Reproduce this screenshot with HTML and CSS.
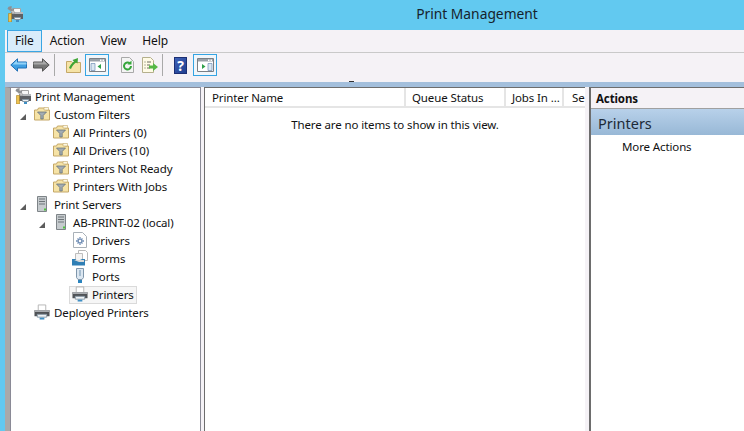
FILE: index.html
```html
<!DOCTYPE html>
<html lang="en">
<head>
    <meta charset="UTF-8">
    <title>Print Management</title>
    <link rel="stylesheet" href="styles.css">
</head>
<body>
    <svg class="defs" width="0" height="0">
        <defs>
            <symbol id="printer" viewBox="0 0 17 16">
                <path d="M4.500 .5h8v6h-8z" fill="#fff" stroke="#b4b4b4"/>
                <path d="M.5 6h16v6.500H.5z" fill="#4f5256"/>
                <path d="M1 6h15v2H1z" fill="#a9acb0"/>
                <path d="M3.500 10.500h10v3h-10z" fill="#eef2f5" stroke="#8a9aa6"/>
                <path d="M6 14h5v2H6z" fill="#3f8fc4"/>
            </symbol>
            <symbol id="mgmt" viewBox="0 0 16 16">
                <path d="M6.500 2.500h7v4h-7z" fill="#f8f8f8" stroke="#a5a5a5"/>
                <path d="M4 6h12v7H4z" fill="#5d6064"/>
                <path d="M4.500 6H16v2H4.500z" fill="#b5b8bb"/>
                <path d="M7.500 11.500h6v2h-6z" fill="#eef2f5" stroke="#8a9aa6"/>
                <path d="M9 14h3v2H9z" fill="#3f8fc4"/>
                <path d="M2 3l3-1 3 5-2 1z" fill="#c4c4c4" stroke="#8a8a8a" stroke-width=".5"/>
                <path d="M.5 3C1 .5 3 0 5 .5L4 2.500 6 3.500 7 1.500c1 2-1 4-3 3.500z" fill="#8d8f92"/>
                <path d="M1.500 7.500h3V16h-3z" fill="#efc24f" stroke="#a87f1f" stroke-width=".6"/>
            </symbol>
            <symbol id="filter" viewBox="0 0 16 15">
                <path d="M.5 3.500h3l1-2h6l1 2h4v10H.5z" fill="#f6e3a6" stroke="#c5a868"/>
                <path d="M10 1h4.500v2.500H10z" fill="#fdf8e4" stroke="#c5a868" stroke-width=".6"/>
                <path d="M3.500 5.500h9L9.200 9v3.500H6.800V9z" fill="#a3acb3" stroke="#5f6a72" stroke-width=".7"/>
            </symbol>
            <symbol id="server" viewBox="0 0 10 16">
                <path d="M.5.5h9v15h-9z" fill="#c6cbce" stroke="#7e8488"/>
                <path d="M2 2.500h6v1H2zM2 5h6v1H2zM2 7.500h6v1H2z" fill="#6d7478"/>
                <path d="M7 12.500h2v2H7z" fill="#4cc63c"/>
            </symbol>
            <symbol id="driver" viewBox="0 0 14 16">
                <path d="M.5.5h9l4 4v11H.5z" fill="#fff" stroke="#a9b1b8"/>
                <path d="M7 5v8M3 9h8M4.500 6.500l5 5M9.500 6.500l-5 5" stroke="#6f8db5" stroke-width="1.300"/>
                <circle cx="7" cy="9" r="1.200" fill="#fff"/>
            </symbol>
            <symbol id="forms" viewBox="0 0 16 16">
                <path d="M6.500.5h7l2 2v8h-9z" fill="#fff" stroke="#b8b8b8"/>
                <path d="M3.500 3.500h7v7h-7z" fill="#f4f4f4" stroke="#bdbdbd"/>
                <path d="M0 9l3 0 3 2 4-2 3 0v6.500H0z" fill="#2f7fb5"/>
                <path d="M2 10h10v2L7 12z" fill="#d9d9d9"/>
            </symbol>
            <symbol id="ports" viewBox="0 0 10 16">
                <path d="M1.500.5h7v9l-1.500 2h-4l-1.500-2z" fill="#dce7f1" stroke="#7f96ab"/>
                <path d="M4 2v6h2V2z" fill="#a7bdd0"/>
                <path d="M3 12h4v3H3z" fill="#2a83bd"/>
            </symbol>
            <symbol id="pane" viewBox="0 0 17 14">
                <path d="M.5.5h16v13H.5z" fill="#fff" stroke="#7a7f85"/>
                <path d="M1 1h15v2.500H1z" fill="#9aa1a8"/>
                <path d="M11 1.500h1.500V3H11zM13.500 1.500H15V3h-1.500z" fill="#fff"/>
            </symbol>
        </defs>
    </svg>

    <header class="titlebar">
        <svg class="title-icon"><use href="#mgmt"/></svg>
        <div class="title-text">Print Management</div>
    </header>

    <div class="window">
        <nav class="menubar">
            <span class="menu-item active">File</span>
            <span class="menu-item">Action</span>
            <span class="menu-item">View</span>
            <span class="menu-item">Help</span>
        </nav>

        <div class="toolbar">
            <span class="tool arrow">
                <svg width="17" height="14" viewBox="0 0 17 14"><path d="M.8 7L7.500 .8V4h9v6h-9v3.200z" fill="#3f9fe2" stroke="#1f6fb5"/><path d="M2.500 6.500h14V4.500H7V2z" fill="#92d2f7"/></svg>
            </span>
            <span class="tool arrow arrow-b">
                <svg width="17" height="14" viewBox="0 0 17 14"><path d="M16.200 7L9.500 .8V4h-9v6h9v3.200z" fill="#767676" stroke="#555"/><path d="M14.500 6.500H.5V4.500H10V2z" fill="#a8a8a8"/></svg>
            </span>
            <span class="tool-sep"></span>
            <span class="tool tool-folder">
                <svg width="15" height="16" viewBox="0 0 15 16"><path d="M.5 4.500h5l1 1h8v10H.5z" fill="#f6e3a6" stroke="#c5a868"/><path d="M3 11c1-3 3-5 5-6.500L6.500 3 12 1l-.5 5.500L10 5.500C8 7 6 9 5 12z" fill="#3fa535"/></svg>
            </span>
            <span class="tool boxed">
                <svg width="17" height="14"><use href="#pane"/><path d="M2 5.500h4v7H2z" fill="#dbe7f1" stroke="#6f8db5" stroke-width=".7"/><path d="M12 6v5L8.500 8.500z" fill="#2fa04a"/></svg>
            </span>
            <span class="tool tool-refresh">
                <svg width="13" height="16" viewBox="0 0 13 16"><path d="M.5.5h8l4 4v11H.5z" fill="#f4f4f4" stroke="#a9a9a9"/><path d="M10 9a3.500 3.500 0 1 1-1-2.500" fill="none" stroke="#35a53a" stroke-width="2"/><path d="M10.500 3.500v4h-4z" fill="#35a53a"/></svg>
            </span>
            <span class="tool tool-export">
                <svg width="16" height="16" viewBox="0 0 16 16"><path d="M.5.5h8l3 3v12H.5z" fill="#fffbe6" stroke="#b5b08c"/><path d="M2.500 5h1M2.500 8h1M2.500 11h1M5 5h4M5 8h3M5 11h3" stroke="#6a6a5e"/><path d="M7 8.500h4V6l5 4-5 4v-2.500H7z" fill="#55b745"/></svg>
            </span>
            <span class="tool-sep sep-b"></span>
            <span class="tool tool-help">
                <span class="help-icon">?</span>
            </span>
            <span class="tool boxed boxed-b">
                <svg width="17" height="14"><use href="#pane"/><path d="M11 5.500h4v7h-4z" fill="#dbe7f1" stroke="#6f8db5" stroke-width=".7"/><path d="M5 6v5l3.500-2.500z" fill="#2fa04a"/></svg>
            </span>
        </div>

        <div class="strip"></div>

        <main class="panes">
            <aside class="tree-pane">
                <div class="row lvl-0"><svg class="icon"><use href="#mgmt"/></svg>Print Management</div>
                <div class="row lvl-1"><span class="expander"></span><svg class="icon"><use href="#filter"/></svg>Custom Filters</div>
                <div class="row lvl-2"><svg class="icon"><use href="#filter"/></svg>All Printers (0)</div>
                <div class="row lvl-2"><svg class="icon"><use href="#filter"/></svg>All Drivers (10)</div>
                <div class="row lvl-2"><svg class="icon"><use href="#filter"/></svg>Printers Not Ready</div>
                <div class="row lvl-2"><svg class="icon"><use href="#filter"/></svg>Printers With Jobs</div>
                <div class="row lvl-1"><span class="expander"></span><svg class="icon"><use href="#server"/></svg>Print Servers</div>
                <div class="row lvl-2"><span class="expander"></span><svg class="icon"><use href="#server"/></svg>AB-PRINT-02 (local)</div>
                <div class="row lvl-3"><svg class="icon"><use href="#driver"/></svg>Drivers</div>
                <div class="row lvl-3"><svg class="icon"><use href="#forms"/></svg>Forms</div>
                <div class="row lvl-3"><svg class="icon"><use href="#ports"/></svg>Ports</div>
                <div class="row lvl-3"><span class="selected"><svg class="icon"><use href="#printer"/></svg>Printers</span></div>
                <div class="row lvl-1"><svg class="icon"><use href="#printer"/></svg>Deployed Printers</div>
            </aside>

            <section class="list-pane">
                <div class="list-head">
                    <div class="col col-name">Printer Name</div>
                    <div class="col col-status">Queue Status</div>
                    <div class="col col-jobs">Jobs In ...</div>
                    <div class="col col-se">Se</div>
                </div>
                <p class="empty">There are no items to show in this view.</p>
            </section>

            <aside class="actions-pane">
                <div class="actions-head">Actions</div>
                <div class="actions-group">Printers</div>
                <div class="actions-item">More Actions</div>
            </aside>
        </main>
    </div>
</body>
</html>
```

FILE: styles.css
```css
* {
    box-sizing: border-box;
}

html, body {
    margin: 0;
    height: 100%;
    overflow: hidden;
}

body {
    display: flex;
    flex-direction: column;
    background: #62c9f0;
    font-family: "Noto Sans", "Open Sans", sans-serif;
    font-size: 11.5px;
    letter-spacing: -0.12px;
    color: #111;
}

.defs {
    display: none;
}

.titlebar {
    height: 30px;
    flex: none;
    display: flex;
    padding: 6px 0 0 7px;
}

.title-icon {
    width: 16px;
    height: 16px;
}

.title-text {
    position: absolute;
    left: 0;
    right: 0;
    top: 4px;
    text-align: center;
    padding-left: 210px;
    font-size: 13.8px;
    letter-spacing: 0;
    line-height: 20px;
    color: #16222c;
}

.window {
    flex: 1;
    margin-left: 5px;
    display: flex;
    flex-direction: column;
    background: #f5f2f6;
    min-height: 0;
}

.menubar {
    height: 23px;
    flex: none;
    display: flex;
    padding-left: 2px;
    border-bottom: 1px solid #c9c9c9;
    font-size: 12px;
}

.menu-item {
    height: 22px;
    line-height: 22px;
    padding: 0 8px;
}

.menu-item.active {
    background: #d9ecfa;
    border: 1px solid #3aa5e4;
    padding: 0 7px;
    line-height: 20px;
}

.toolbar {
    height: 29px;
    flex: none;
    display: flex;
    align-items: center;
    padding: 0 0 5px 5px;
}

.tool {
    height: 24px;
    display: flex;
    align-items: center;
    justify-content: center;
}

.tool.arrow {
    width: 17px;
    margin-right: 6px;
}

.tool.arrow-b {
    margin-right: 4px;
}

.tool-sep {
    width: 1px;
    height: 22px;
    background: #a9a9a9;
}

.tool-folder {
    width: 15px;
    margin-left: 11px;
}

.tool.boxed {
    width: 24px;
    height: 22px;
    border: 1px solid #34a4e3;
    background: #f0f6fb;
    margin-left: 4px;
}

.tool-refresh {
    width: 13px;
    margin-left: 12px;
}

.tool-export {
    width: 16px;
    margin-left: 8px;
}

.sep-b {
    margin-left: 4px;
}

.tool-help {
    width: 13px;
    margin-left: 11px;
}

.help-icon {
    width: 13px;
    height: 17px;
    background: linear-gradient(135deg, #3f62b8, #1f3f90);
    border: 1px solid #1c2f74;
    color: #fff;
    font-weight: 700;
    font-size: 14px;
    line-height: 15px;
    text-align: center;
}

.tool.boxed-b {
    margin-left: 6px;
}

.strip {
    height: 5px;
    flex: none;
    background: #a3bfdc;
    position: relative;
}

/* stray resize mark on the top edge of the panes */
.strip::before {
    content: "";
    position: absolute;
    left: 344px;
    top: -1px;
    width: 5px;
    height: 1px;
    background: #333;
}

.panes {
    flex: 1;
    display: flex;
    min-height: 0;
    background: #f5f2f6;
}

.tree-pane {
    width: 196px;
    flex: none;
    background: #fff;
    border-left: 5px solid #a9a9a9;
    border-right: 1px solid #8a8a96;
    border-top: 1px solid #8a8a96;
    box-shadow: inset 1px 0 #8a8a96;
}

.row {
    height: 18px;
    padding-bottom: 2px;
    display: flex;
    align-items: center;
    white-space: nowrap;
}

.lvl-0 { padding-left: 5px; }
.lvl-1 { padding-left: 24px; }
.lvl-2 { padding-left: 43px; }
.lvl-3 { padding-left: 62px; }

.expander {
    width: 15px;
    height: 16px;
    margin-left: -15px;
    position: relative;
}

/* little filled triangle of an open node */
.expander::after {
    content: "";
    position: absolute;
    left: 1px;
    top: 8px;
    border-style: solid;
    border-width: 0 0 6px 6px;
    border-color: transparent transparent #5c5c5c transparent;
}

.icon {
    width: 16px;
    height: 16px;
    margin-right: 4px;
    flex: none;
}

.selected {
    display: flex;
    align-items: center;
    height: 18px;
    margin-top: 2px;
    padding-bottom: 2px;
    padding-right: 2px;
    margin-left: -3px;
    padding-left: 2px;
    background: #f6f6f6;
    border: 1px solid #dadada;
}

.list-pane {
    width: 381px;
    flex: none;
    margin-left: 3px;
    background: #fff;
    border-left: 1px solid #6d6d6d;
    border-top: 1px solid #6d6d6d;
}

.list-head {
    height: 20px;
    display: flex;
    border-bottom: 2px solid #e5e5e5;
}

.col {
    padding-left: 6px;
    line-height: 20px;
    border-right: 2px solid #e5e5e5;
    white-space: nowrap;
    overflow: hidden;
}

.col-name { width: 201px; padding-left: 7px; }
.col-status { width: 100px; }
.col-jobs { width: 58px; }
.col-se { width: 21px; padding-left: 8px; border-right: 0; }

.empty {
    margin: 0;
    padding: 8px 0 0 0;
    text-align: center;
    line-height: 18px;
}

.actions-pane {
    flex: 1;
    margin-left: 4px;
    background: #fff;
    border-left: 2px solid #6d6d6d;
    border-top: 1px solid #6d6d6d;
}

.actions-head {
    height: 21px;
    padding-left: 5px;
    font-weight: 700;
    line-height: 22px;
    background: #f5f2f6;
    border-bottom: 1px solid #a0a0a0;
}

.actions-group {
    height: 26px;
    padding-left: 7px;
    font-size: 14.5px;
    letter-spacing: 0;
    line-height: 29px;
    color: #1c2a38;
    background: linear-gradient(#b8d1ea, #98b8d6);
}

.actions-item {
    padding: 2px 0 0 31px;
    line-height: 19px;
}
```
